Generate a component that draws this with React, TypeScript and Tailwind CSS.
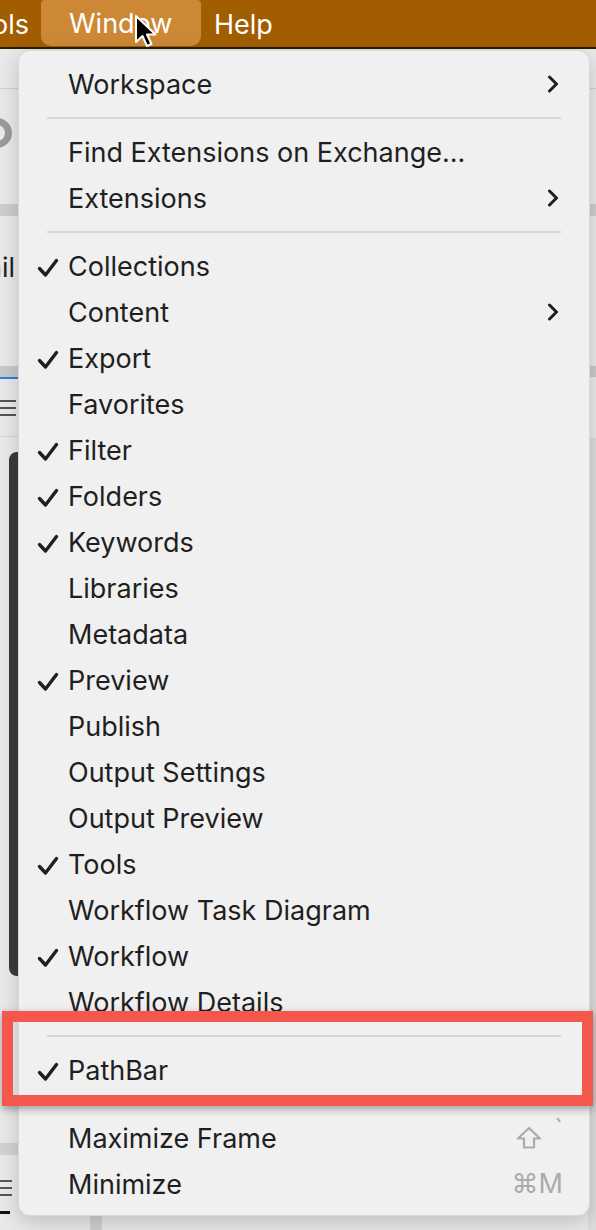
import React from 'react';

type Item =
  | { kind: 'sep' }
  | { kind: 'row'; label: string; checked?: boolean; submenu?: boolean; shortcut?: React.ReactNode };

const ITEMS: Item[] = [
  { kind: 'row', label: 'Workspace', submenu: true },
  { kind: 'sep' },
  { kind: 'row', label: 'Find Extensions on Exchange...' },
  { kind: 'row', label: 'Extensions', submenu: true },
  { kind: 'sep' },
  { kind: 'row', label: 'Collections', checked: true },
  { kind: 'row', label: 'Content', submenu: true },
  { kind: 'row', label: 'Export', checked: true },
  { kind: 'row', label: 'Favorites' },
  { kind: 'row', label: 'Filter', checked: true },
  { kind: 'row', label: 'Folders', checked: true },
  { kind: 'row', label: 'Keywords', checked: true },
  { kind: 'row', label: 'Libraries' },
  { kind: 'row', label: 'Metadata' },
  { kind: 'row', label: 'Preview', checked: true },
  { kind: 'row', label: 'Publish' },
  { kind: 'row', label: 'Output Settings' },
  { kind: 'row', label: 'Output Preview' },
  { kind: 'row', label: 'Tools', checked: true },
  { kind: 'row', label: 'Workflow Task Diagram' },
  { kind: 'row', label: 'Workflow', checked: true },
  { kind: 'row', label: 'Workflow Details' },
  { kind: 'sep' },
  { kind: 'row', label: 'PathBar', checked: true },
  { kind: 'sep' },
  {
    kind: 'row',
    label: 'Maximize Frame',
    shortcut: (
      <span className="flex items-center gap-[12px]">
        <svg width="26" height="24" viewBox="0 0 26 24" fill="none" stroke="#ababab" strokeWidth="2.2" strokeLinejoin="round">
          <path d="M13 2 L24 12.5 L18 12.5 L18 21.5 L8 21.5 L8 12.5 L2 12.5 Z" />
        </svg>
        <span className="-mt-[16px]">`</span>
      </span>
    ),
  },
  { kind: 'row', label: 'Minimize', shortcut: <span>⌘M</span> },
];

const Check = () => (
  <svg width="22" height="20" viewBox="0 0 22 20" fill="none" stroke="#1f1f1f" strokeWidth="3.4" strokeLinecap="round" strokeLinejoin="round">
    <path d="M2.5 10.5 L8.5 17 L19.5 2.5" />
  </svg>
);

const Chevron = () => (
  <svg width="12" height="18" viewBox="0 0 12 18" fill="none" stroke="#1f1f1f" strokeWidth="3" strokeLinecap="round" strokeLinejoin="round">
    <path d="M2.5 2 L9.5 9 L2.5 16" />
  </svg>
);

const Cursor = () => (
  <svg width="26" height="36" viewBox="0 0 26 36" className="absolute left-[134px] top-[14px]">
    <path d="M2 2 L2 28 L8.5 22 L13 32 L17.5 30 L13 20.5 L21.5 20.5 Z" fill="#000" stroke="#fff" strokeWidth="2" strokeLinejoin="round" />
  </svg>
);

export default function App() {
  return (
    <div
      className="relative w-[596px] h-[1230px] overflow-hidden bg-[#e9e9e9]"
      style={{ fontFamily: 'Inter, "Noto Sans", "Liberation Sans", sans-serif' }}
    >
      {/* menu bar */}
      <div className="relative h-[49px] bg-[#a15d00] border-b-2 border-[#2e1b00] flex items-center text-white text-[27px]">
        <span className="ml-[-8px] pt-[3px]">ols</span>
        <div className="ml-[12px] h-[46px] w-[160px] rounded-b-[10px] rounded-t-[4px] bg-[#cc8835] flex items-center pl-[28px] pt-[3px] self-start">
          Window
        </div>
        <span className="ml-[13px] pt-[3px]">Help</span>
        <Cursor />
      </div>

      {/* background window strips */}
      <div className="absolute left-0 top-[88px] w-[20px] h-[1px] bg-[#cfcfcf]" />
      <div className="absolute left-[-18px] top-[118px] w-[30px] h-[30px] rounded-full border-[7px] border-[#9a9a9a]" />
      <div className="absolute left-0 top-[204px] w-[20px] h-[12px] bg-[#cdcdcd]" />
      <div className="absolute left-[-14px] top-[248px] text-[27px] text-[#222]">nil</div>
      <div className="absolute left-0 top-[366px] w-[20px] h-[11px] bg-[#c9c9c9]" />
      <div className="absolute left-0 top-[377px] w-[20px] h-[2px] bg-[#2f7de1]" />
      <div className="absolute left-0 top-[400px] flex flex-col gap-[5px]">
        <div className="w-[16px] h-[2px] bg-[#555]" />
        <div className="w-[16px] h-[2px] bg-[#555]" />
        <div className="w-[16px] h-[2px] bg-[#555]" />
      </div>
      <div className="absolute left-0 top-[436px] w-[20px] h-[1px] bg-[#d4d4d4]" />
      <div className="absolute left-[9px] top-[452px] w-[14px] h-[524px] rounded-l-[8px] bg-[#3b3b3b]" />
      <div className="absolute left-0 top-[1143px] w-[20px] h-[12px] bg-[#d2d2d2]" />
      <div className="absolute left-0 top-[1180px] flex flex-col gap-[5px]">
        <div className="w-[12px] h-[2px] bg-[#555]" />
        <div className="w-[12px] h-[2px] bg-[#555]" />
        <div className="w-[12px] h-[2px] bg-[#555]" />
      </div>
      <div className="absolute left-0 top-[1211px] w-[10px] h-[3px] bg-[#111]" />
      <div className="absolute left-[90px] top-[1210px] w-[12px] h-[20px] bg-[#d0d0d0]" />
      <div className="absolute right-0 top-[88px] w-[8px] h-[1px] bg-[#cfcfcf]" />
      <div className="absolute right-0 top-[204px] w-[8px] h-[12px] bg-[#cdcdcd]" />
      <div className="absolute right-0 top-[366px] w-[8px] h-[11px] bg-[#c9c9c9]" />
      <div className="absolute right-0 top-[438px] w-[8px] h-[800px] bg-[#dcdcdc]" />

      {/* dropdown menu */}
      <div className="absolute left-[18px] top-[50px] w-[572px] h-[1166px] rounded-[12px] bg-[#f0f0f0] border border-[#d8d8d8] shadow-[0_6px_20px_rgba(0,0,0,0.18)] pt-[10px] text-[27px] text-[#1f1f1f]">
        {ITEMS.map((it, i) =>
          it.kind === 'sep' ? (
            <div key={i} className="h-[22px] flex items-center px-[28px]">
              <div className="w-full h-[2px] bg-[#d6d6d6]" />
            </div>
          ) : (
            <div key={i} className="h-[46px] flex items-center">
              <div className="w-[49px] flex justify-end pr-[9px] pt-[3px]">{it.checked && <Check />}</div>
              <span className="flex-1 leading-none">{it.label}</span>
              {it.submenu && (
                <div className="pr-[30px]">
                  <Chevron />
                </div>
              )}
              {it.shortcut && <div className="pr-[26px] text-[#ababab]">{it.shortcut}</div>}
            </div>
          )
        )}
      </div>

      {/* annotation highlight */}
      <div className="absolute left-[2px] top-[1011px] w-[591px] h-[95px] border-[11px] border-[#f4574b] shadow-[0_3px_8px_rgba(0,0,0,0.35)]" />
    </div>
  );
}
